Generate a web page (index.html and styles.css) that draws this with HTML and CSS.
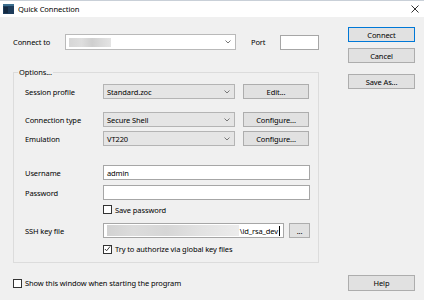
FILE: index.html
```html
<!DOCTYPE html>
<html lang="en">
<head>
    <meta charset="UTF-8">
    <title>Quick Connection</title>
    <link rel="stylesheet" href="styles.css">
</head>
<body>

<div class="window">
    <div class="titlebar">
        <svg class="app-icon" width="11" height="10" viewBox="0 0 11 10">
            <rect x="0" y="0" width="11" height="10" fill="#1d3b5a"/>
            <rect x="0" y="0" width="11" height="2" fill="#3d6f8f"/>
            <rect x="1" y="3" width="4" height="6" fill="#14283f"/>
        </svg>
        <span class="title">Quick Connection</span>
        <svg class="close" width="8" height="8" viewBox="0 0 8 8">
            <path d="M0.5 0.5 L7.5 7.5 M7.5 0.5 L0.5 7.5" stroke="#333" stroke-width="1"/>
        </svg>
    </div>

    <div class="dialog">
        <div class="main">
            <div class="connect-row">
                <span class="lbl connect-lbl">Connect to</span>
                <div class="combo combo-edit">
                    <span class="blur blur-host"></span>
                    <svg class="chev" width="6" height="4" viewBox="0 0 6 4"><polyline points="0.5,0.5 3,3 5.5,0.5" fill="none" stroke="#777"/></svg>
                </div>
                <span class="lbl port-lbl">Port</span>
                <span class="textbox port"></span>
            </div>

            <fieldset class="options">
                <legend>Options...</legend>

                <div class="row r-profile">
                    <span class="lbl">Session profile</span>
                    <div class="combo">
                        <span>Standard.zoc</span>
                        <svg class="chev" width="6" height="4" viewBox="0 0 6 4"><polyline points="0.5,0.5 3,3 5.5,0.5" fill="none" stroke="#777"/></svg>
                    </div>
                    <button class="btn side-btn">Edit...</button>
                </div>

                <div class="row r-type">
                    <span class="lbl">Connection type</span>
                    <div class="combo">
                        <span>Secure Shell</span>
                        <svg class="chev" width="6" height="4" viewBox="0 0 6 4"><polyline points="0.5,0.5 3,3 5.5,0.5" fill="none" stroke="#777"/></svg>
                    </div>
                    <button class="btn side-btn">Configure...</button>
                </div>

                <div class="row r-emu">
                    <span class="lbl">Emulation</span>
                    <div class="combo">
                        <span>VT220</span>
                        <svg class="chev" width="6" height="4" viewBox="0 0 6 4"><polyline points="0.5,0.5 3,3 5.5,0.5" fill="none" stroke="#777"/></svg>
                    </div>
                    <button class="btn side-btn">Configure...</button>
                </div>

                <div class="row r-user">
                    <span class="lbl">Username</span>
                    <span class="textbox wide">admin</span>
                </div>

                <div class="row r-pass">
                    <span class="lbl">Password</span>
                    <span class="textbox wide"></span>
                </div>

                <div class="row r-save">
                    <span class="lbl"></span>
                    <span class="check"></span>
                    <span class="check-text">Save password</span>
                </div>

                <div class="row r-key">
                    <span class="lbl">SSH key file</span>
                    <span class="textbox keyfile"><span class="blur blur-path"></span><span class="key-name">\id_rsa_dev</span><span class="caret"></span></span>
                    <button class="btn dots">...</button>
                </div>

                <div class="row r-auth">
                    <span class="lbl"></span>
                    <span class="check checked">
                        <svg width="8" height="8" viewBox="0 0 8 8"><polyline points="1,4 3,6 7,1" fill="none" stroke="#222" stroke-width="1"/></svg>
                    </span>
                    <span class="check-text">Try to authorize via global key files</span>
                </div>
            </fieldset>
        </div>

        <div class="side">
            <button class="btn btn-default">Connect</button>
            <button class="btn cancel">Cancel</button>
            <button class="btn save-as">Save As...</button>
        </div>

        <div class="footer-check">
            <span class="check"></span>
            <span class="check-text">Show this window when starting the program</span>
        </div>
        <button class="btn help">Help</button>
    </div>
</div>

</body>
</html>
```

FILE: styles.css
```css
html, body {
    margin: 0;
    padding: 0;
}
body {
    font-family: "Noto Sans", sans-serif;
    font-size: 7.5px;
    letter-spacing: -0.1px;
    color: #000;
    background: #f0f0f0;
}
.window {
    width: 424px;
    height: 300px;
    background: #f0f0f0;
    overflow: hidden;
}
.titlebar {
    box-sizing: border-box;
    height: 17px;
    background: #fff;
    border-top: 1px solid #c9d0d8;
    display: flex;
    align-items: center;
    padding-left: 3px;
}
.app-icon {
    flex: none;
}
.title {
    margin-left: 4px;
    font-size: 7.6px;
    flex: 1;
}
.close {
    margin-right: 5px;
}
.dialog {
    display: grid;
    grid-template-columns: 306px 67px;
    column-gap: 29px;
    row-gap: 12px;
    padding: 10px 0 0 13px;
    align-items: start;
}
.main {
    padding-top: 7px;
}
.connect-row {
    display: flex;
    align-items: center;
    height: 16px;
}
.lbl {
    flex: none;
    white-space: nowrap;
}
.connect-lbl {
    width: 52px;
}
.port-lbl {
    width: 29px;
    margin-left: 15px;
}
.combo {
    box-sizing: border-box;
    height: 15px;
    width: 132px;
    display: flex;
    align-items: center;
    justify-content: space-between;
    padding: 0 4px 0 3px;
    background: #e5e5e5;
    border: 1px solid #b4b4b4;
}
.combo-edit {
    width: 171px;
    height: 16px;
    background: #fff;
    border-color: #b9b9b9;
}
.textbox {
    box-sizing: border-box;
    height: 15px;
    background: #fff;
    border: 1px solid #a6a6a6;
    display: flex;
    align-items: center;
    padding-left: 3px;
}
.port {
    width: 39px;
}
.wide {
    width: 207px;
}
.keyfile {
    width: 181px;
    padding-left: 3px;
    padding-right: 3px;
}
.blur {
    display: block;
    height: 9px;
}
.blur-host {
    width: 42px;
    background: linear-gradient(90deg, #d6d6d6 0%, #dedede 30%, #cfcfcf 55%, #d9d9d9 75%, #e4e4e4 100%);
}
.blur-path {
    flex: 1;
    height: 11px;
    background: linear-gradient(90deg, #d2d2d2 0%, #dcdcdc 20%, #d6d6d6 45%, #e2e2e2 70%, #ececec 100%);
}
.key-name {
    margin-left: 1px;
}
.caret {
    width: 1px;
    height: 10px;
    background: #000;
    margin-left: 1px;
}
.options {
    box-sizing: border-box;
    width: 306px;
    margin: 16px 0 0 0;
    padding: 6px 0 7px 0;
    border: 1px solid #dcdcdc;
    min-width: 0;
}
.options legend {
    margin-left: 4px;
    padding: 0 1px;
    line-height: 12px;
}
.row {
    display: flex;
    align-items: center;
    padding-left: 11px;
    height: 15px;
}
.row .lbl {
    width: 78px;
}
.r-type { margin-top: 13px; }
.r-emu { margin-top: 4px; }
.r-user { margin-top: 19px; }
.r-pass { margin-top: 5px; }
.r-save { margin-top: 3px; height: 13px; }
.r-key { margin-top: 7px; }
.r-auth { margin-top: 5px; height: 12px; }
.btn {
    box-sizing: border-box;
    font-family: "Noto Sans", sans-serif;
    font-size: 7.5px;
    letter-spacing: -0.1px;
    color: #000;
    background: #e1e1e1;
    border: 1px solid #adadad;
    padding: 0;
    height: 15px;
    line-height: 12px;
}
.side-btn {
    width: 66px;
    margin-left: 8px;
}
.dots {
    width: 21px;
    margin-left: 5px;
    height: 15px;
}
.side {
    display: flex;
    flex-direction: column;
}
.side .btn {
    width: 67px;
}
.btn-default {
    border-color: #0078d7;
}
.cancel {
    margin-top: 6px;
}
.save-as {
    margin-top: 11px;
}
.help {
    width: 67px;
    height: 16px;
}
.check {
    box-sizing: border-box;
    flex: none;
    width: 9px;
    height: 9px;
    border: 1px solid #333;
    background: #fff;
    display: flex;
    align-items: center;
    justify-content: center;
}
.check svg {
    display: block;
}
.check-text {
    margin-left: 3px;
    white-space: nowrap;
}
.footer-check {
    display: flex;
    align-items: center;
    height: 16px;
}
```
